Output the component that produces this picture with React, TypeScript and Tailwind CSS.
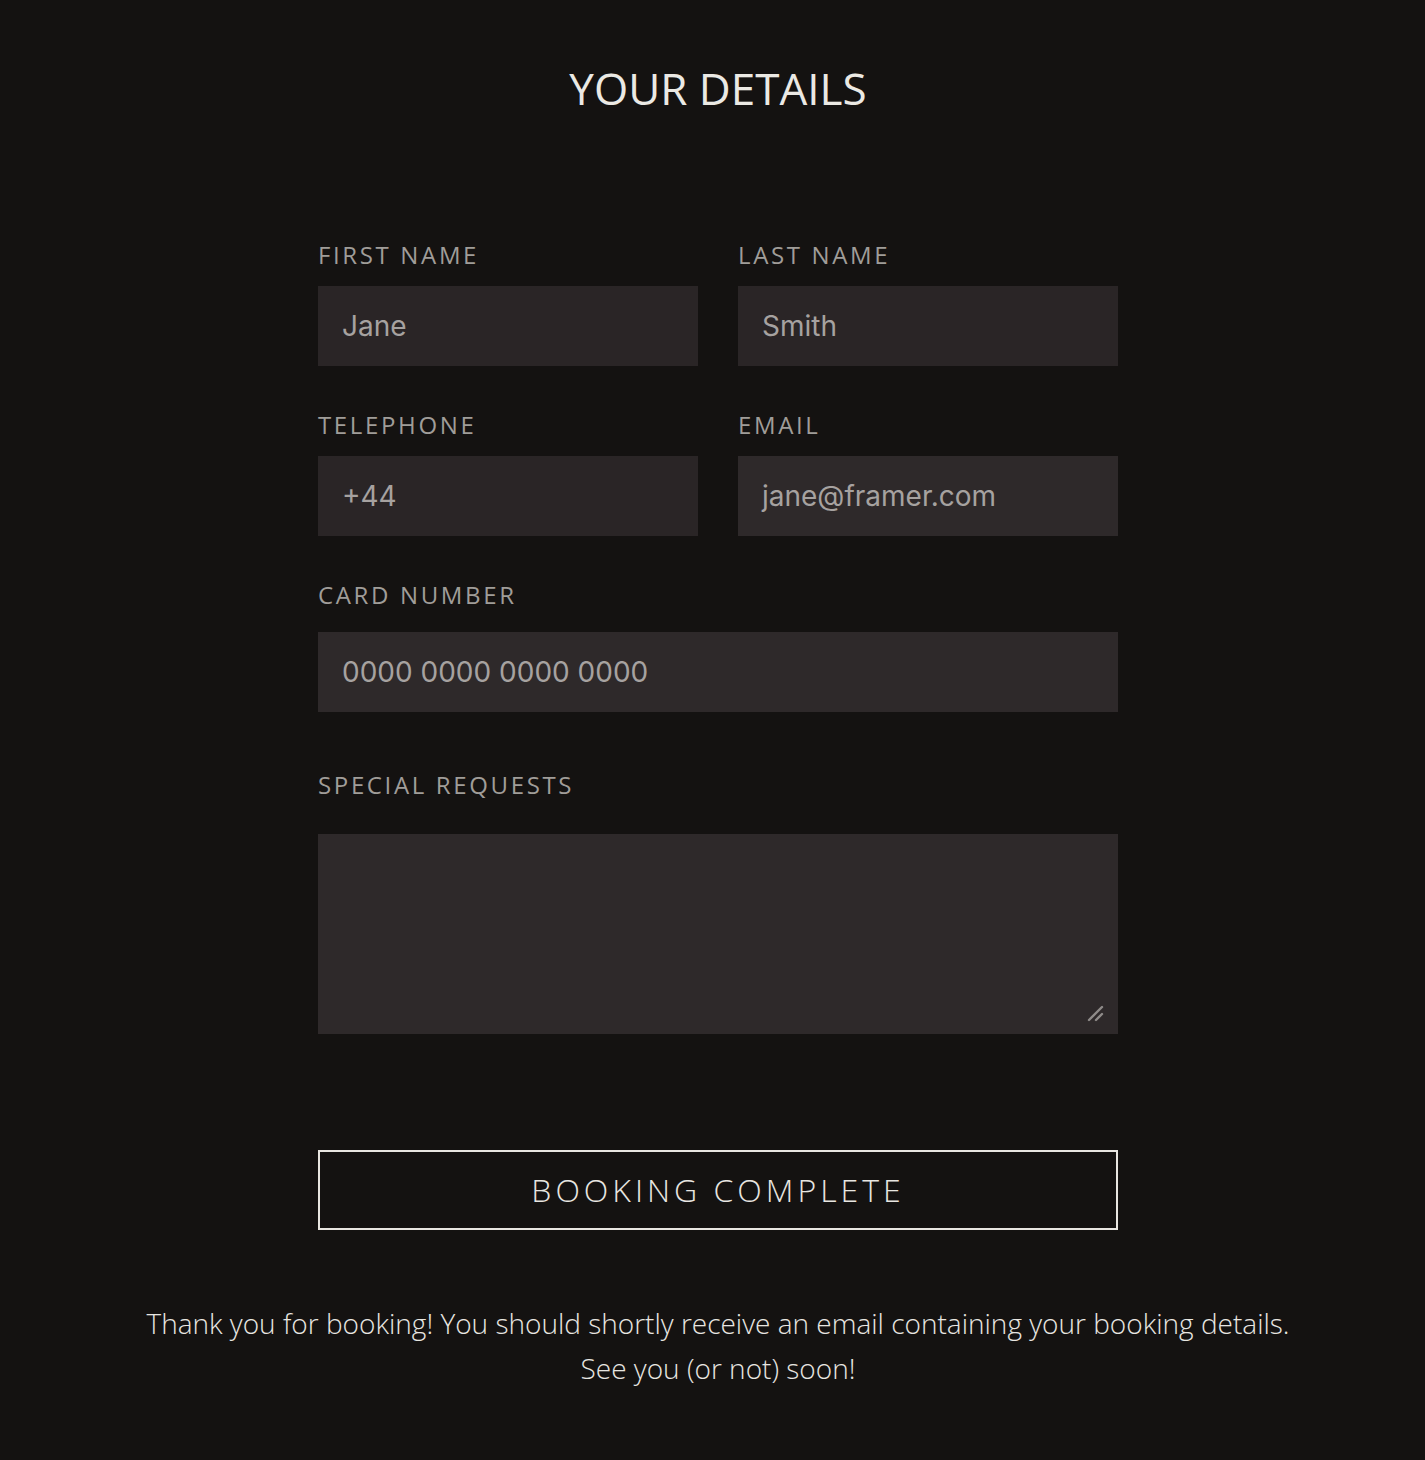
import React from "react";

const labelCls =
  "block font-['Open_Sans',sans-serif] font-normal text-[24px] leading-[34px] tracking-[0.11em] text-[#a09d99]";
const inputCls =
  "w-full h-[80px] px-[24px] font-['Inter',sans-serif] text-[28px] text-[#a6a2a0] outline-none";

export default function App() {
  return (
    <div className="min-h-[1460px] w-full bg-[#141211] pl-[11px] pt-[62px] font-['Open_Sans',sans-serif]">
      <h1 className="text-center text-[44px] leading-[1.2] text-[#ebe9e4] font-normal">
        YOUR DETAILS
      </h1>
      <div className="mx-auto mt-[123px] w-[800px]">
        <div className="grid grid-cols-2 gap-x-[40px]">
          <div>
            <label className={labelCls}>FIRST NAME</label>
            <div className={`mt-[14px] flex items-center bg-[#2a2526] ${inputCls}`}>Jane</div>
          </div>
          <div>
            <label className={labelCls}>LAST NAME</label>
            <div className={`mt-[14px] flex items-center bg-[#2a2526] ${inputCls}`}>Smith</div>
          </div>
          <div className="mt-[42px]">
            <label className={labelCls}>TELEPHONE</label>
            <div className={`mt-[14px] flex items-center bg-[#2a2526] ${inputCls}`}>+44</div>
          </div>
          <div className="mt-[42px]">
            <label className={labelCls}>EMAIL</label>
            <div className={`mt-[14px] flex items-center bg-[#2e292a] ${inputCls}`}>jane@framer.com</div>
          </div>
        </div>
        <div className="mt-[42px]">
          <label className={labelCls}>CARD NUMBER</label>
          <div className={`mt-[20px] flex items-center bg-[#2e292a] ${inputCls}`}>0000 0000 0000 0000</div>
        </div>
        <div className="mt-[56px]">
          <label className={labelCls}>SPECIAL REQUESTS</label>
          <div className="relative mt-[32px] h-[200px] w-full bg-[#2e292a]">
            <svg
              className="absolute right-[13px] bottom-[12px]"
              width="18"
              height="18"
              viewBox="0 0 18 18"
            >
              <path d="M2 16 L15 3" stroke="#8f8b89" strokeWidth="2.4" strokeLinecap="round" />
              <path d="M9 16 L15 10" stroke="#8f8b89" strokeWidth="2.4" strokeLinecap="round" />
            </svg>
          </div>
        </div>
        <button className="mt-[116px] flex h-[80px] w-full items-center justify-center border-2 border-[#e8e6e1] bg-transparent font-['Open_Sans',sans-serif] font-light text-[32px] tracking-[0.125em] text-[#e8e6e1]">
          BOOKING COMPLETE
        </button>
      </div>
      <p className="mt-[71px] text-center text-[28px] font-light leading-[45px] text-[#e8e6e1]">
        Thank you for booking! You should shortly receive an email containing your booking details.
        <br />
        See you (or not) soon!
      </p>
    </div>
  );
}
